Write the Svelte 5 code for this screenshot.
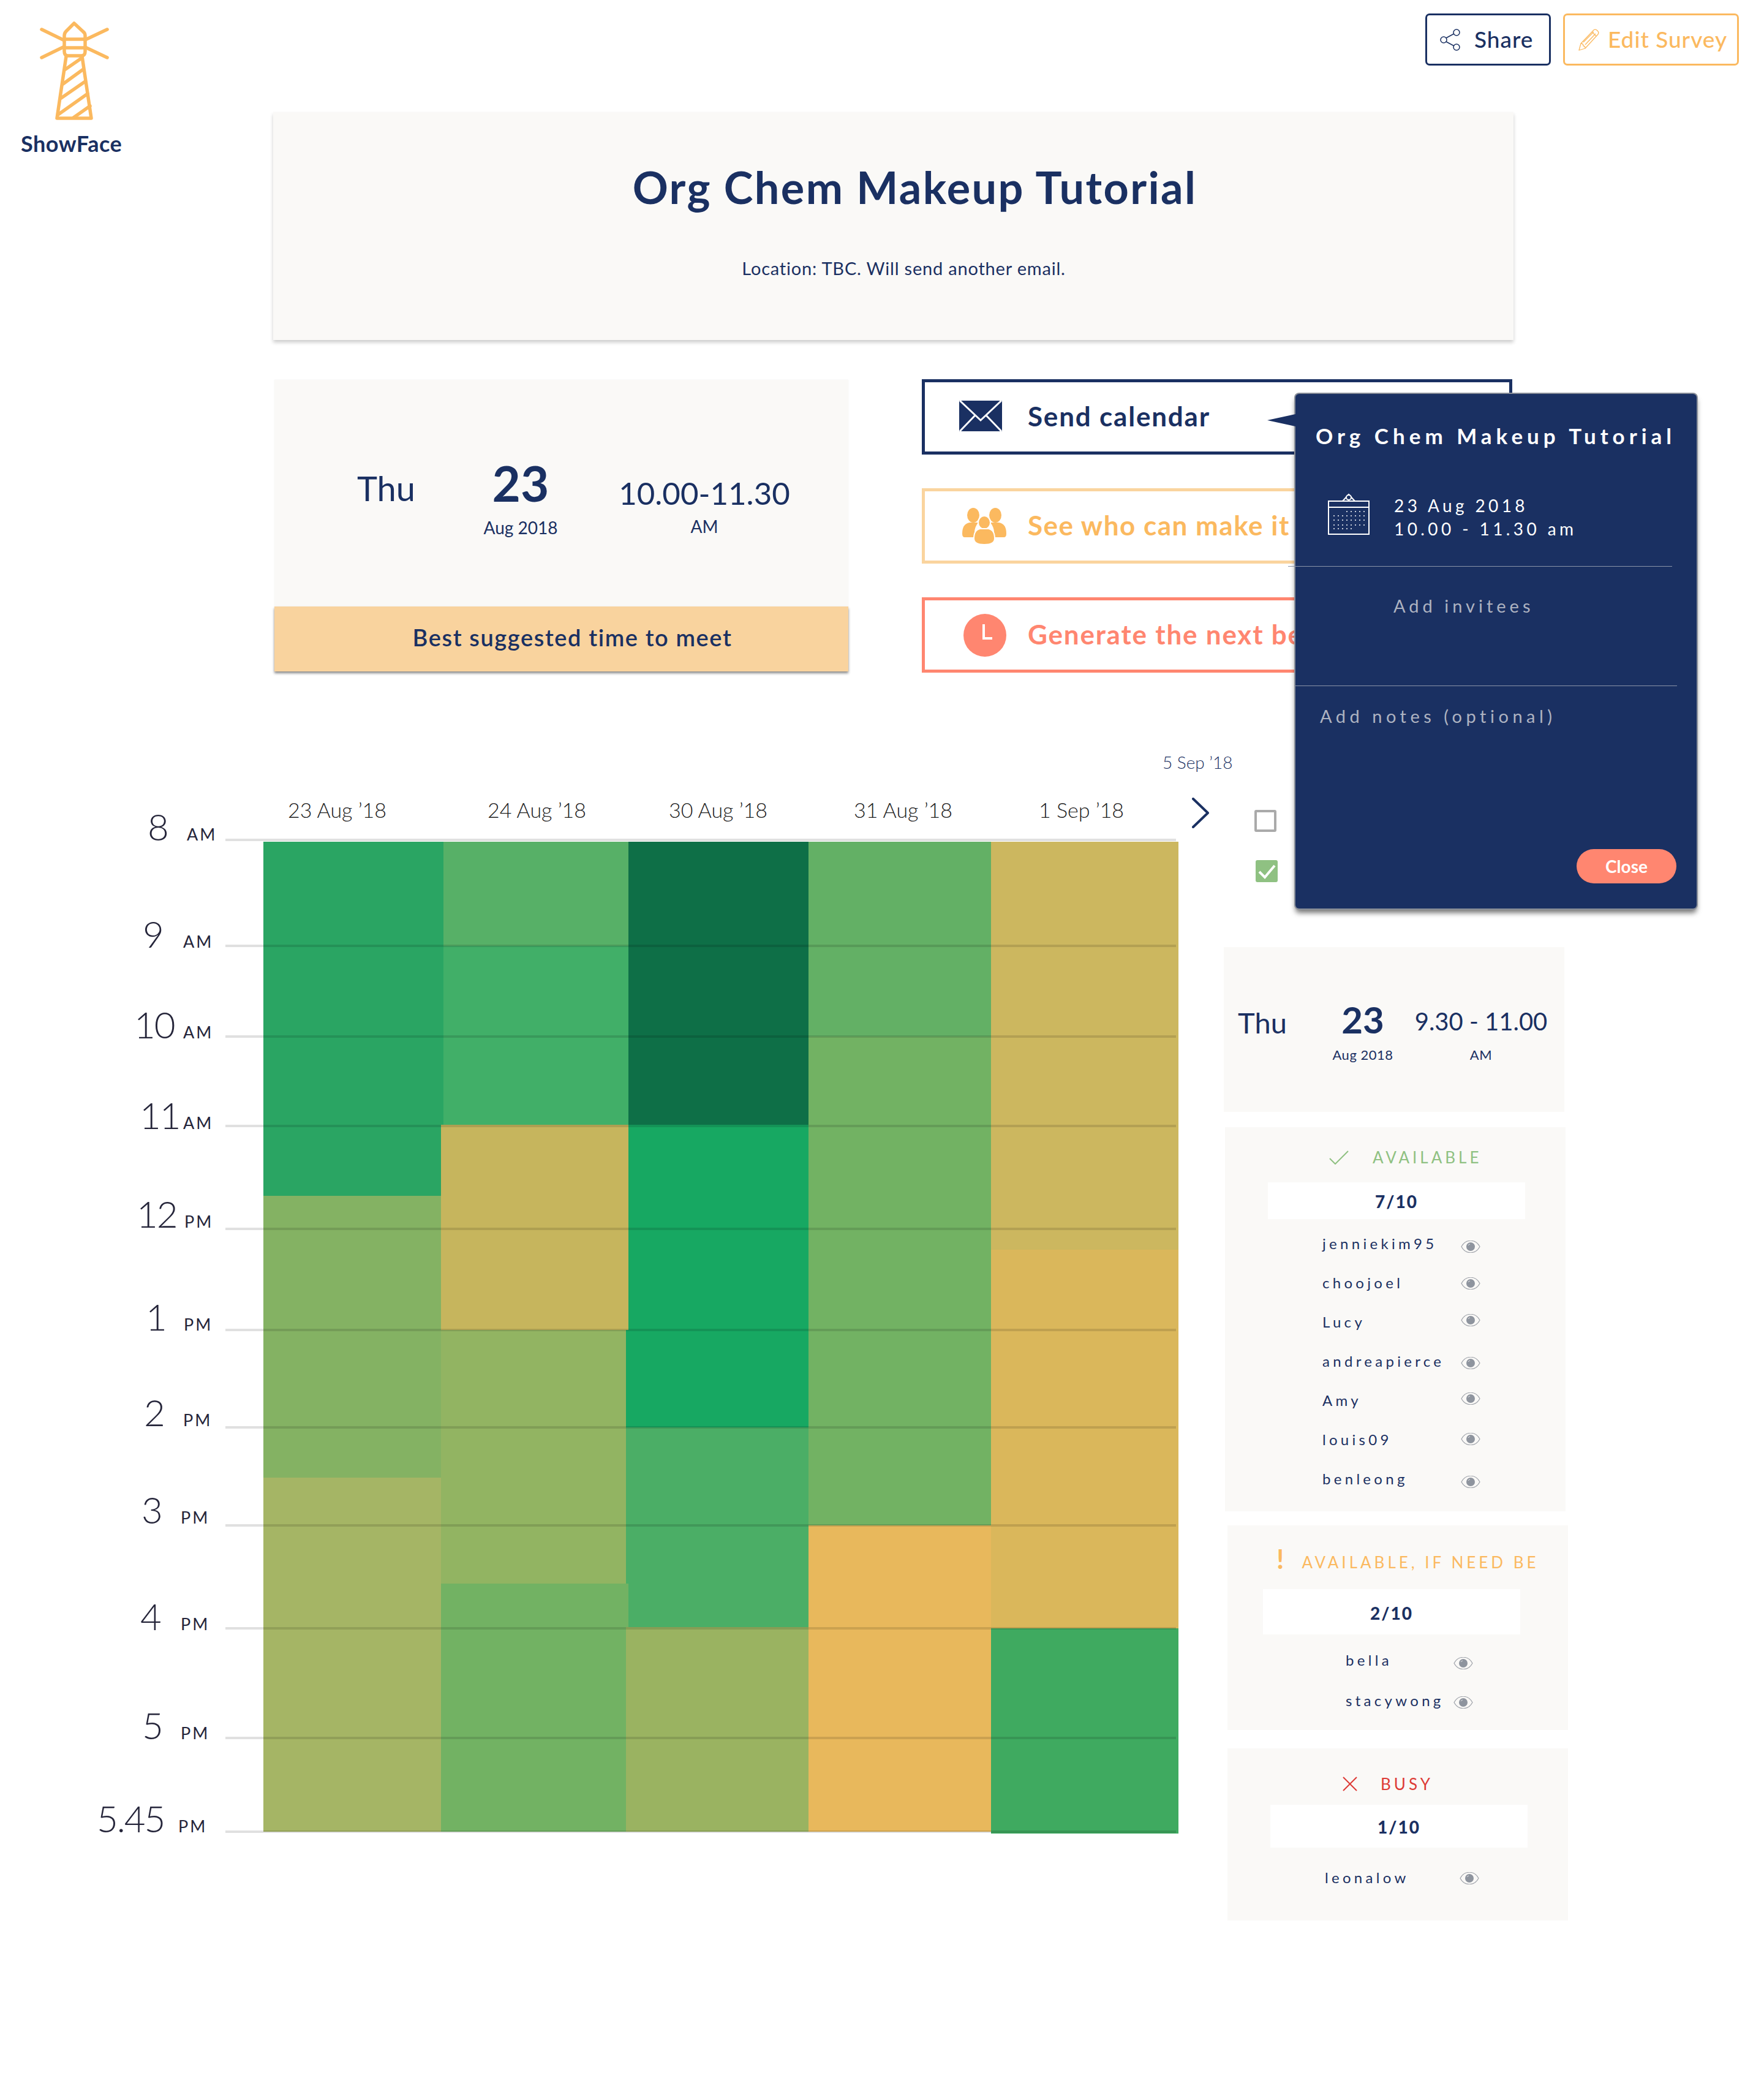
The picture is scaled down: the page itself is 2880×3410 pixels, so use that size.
<script>
  const TOP = 1200;

  const cells = [
    [430, 724, 1374, 1952, '#2aa563'],
    [430, 720, 1952, 2412, '#84b263'],
    [430, 720, 2412, 2990, '#a5b565'],
    [724, 1026, 1374, 1544, '#57b067'],
    [724, 1026, 1544, 1836, '#41af68'],
    [720, 1026, 1836, 2171, '#c6b55d'],
    [720, 1022, 2171, 2585, '#92b462'],
    [720, 1026, 2585, 2656, '#72b263'],
    [720, 1022, 2656, 2990, '#72b263'],
    [1026, 1320, 1374, 1836, '#0e6f47'],
    [1026, 1320, 1836, 2171, '#17a862'],
    [1022, 1320, 2171, 2330, '#17a862'],
    [1022, 1320, 2330, 2585, '#4bae66'],
    [1026, 1320, 2585, 2656, '#4bae66'],
    [1022, 1320, 2656, 2990, '#9ab361'],
    [1320, 1618, 1374, 1692, '#63b065'],
    [1320, 1618, 1692, 2490, '#72b263'],
    [1320, 1618, 2490, 2990, '#e8b85c'],
    [1618, 1924, 1374, 2040, '#ccb75f'],
    [1618, 1924, 2040, 2658, '#dab75b'],
    [1618, 1924, 2658, 2993, '#3faa60']
  ];

  const hours = [
    { t: '8', ap: 'AM', x: 241, apx: 305, y: 1371, base: 1373 },
    { t: '9', ap: 'AM', x: 233, apx: 299, y: 1544, base: 1548 },
    { t: '10', ap: 'AM', x: 219, apx: 299, y: 1692, base: 1696 },
    { t: '11', ap: 'AM', x: 228, apx: 299, y: 1838, base: 1844 },
    { t: '12', ap: 'PM', x: 223, apx: 301, y: 2006, base: 2005 },
    { t: '1', ap: 'PM', x: 238, apx: 300, y: 2171, base: 2173 },
    { t: '2', ap: 'PM', x: 235, apx: 299, y: 2330, base: 2329 },
    { t: '3', ap: 'PM', x: 231, apx: 295, y: 2490, base: 2488 },
    { t: '4', ap: 'PM', x: 229, apx: 295, y: 2658, base: 2662 },
    { t: '5', ap: 'PM', x: 232, apx: 295, y: 2837, base: 2840 },
    { t: '5.45', ap: 'PM', x: 158, apx: 291, y: 2990, base: 2992 }
  ];

  const dates = [
    { t: '23 Aug ’18', x: 470 },
    { t: '24 Aug ’18', x: 796 },
    { t: '30 Aug ’18', x: 1092 },
    { t: '31 Aug ’18', x: 1394 },
    { t: '1 Sep ’18', x: 1696 }
  ];

  const available = [
    ['jenniekim95', 4],
    ['choojoel', 0],
    ['Lucy', -4],
    ['andreapierce', 2],
    ['Amy', -4],
    ['louis09', -2],
    ['benleong', 4]
  ];
</script>

{#snippet eye(shift = 0)}
  <svg class="eye" style="transform: translateY({shift}px)" viewBox="0 0 32 20" width="32" height="20">
    <path d="M1 10 C8 -3 24 -3 31 10 C24 23 8 23 1 10 Z" fill="none" stroke="#a0a4ab" stroke-width="1.2" />
    <circle cx="16" cy="10" r="7" fill="#8e949e" />
    <path d="M12 8 Q13 6 15 6" fill="none" stroke="#e6e7ea" stroke-width="1" />
  </svg>
{/snippet}

<div class="page">
  <header class="top">
    <div class="logo">
      <svg viewBox="60 30 124 170" width="124" height="170">
        <g fill="none" stroke="#fbb95f" stroke-width="5.5" stroke-linecap="round" stroke-linejoin="round">
          <path d="M105 62 V58 Q105 54 108 51 L121 38 L135 51 Q139 54 139 58 V84 Q139 91 133 91 H111 Q105 91 105 84 Z" />
          <path d="M105 64 H139 M105 78 H139" />
          <path d="M68 48 L103 65 M175 48 L139 65 M68 94 L103 77 M175 94 L139 77" />
          <path d="M108 92 L93 193 H149 L134 92" />
          <path d="M107 113 L133 95 M103 137 L136 113 M100 160 L139 133 M95 187 L143 153 M120 192 L147 173" />
        </g>
      </svg>
      <div class="brand">ShowFace</div>
    </div>
    <div class="top-actions">
      <div class="btn share">
        <svg viewBox="0 0 34 36" width="34" height="36">
          <g fill="none" stroke="#1a3062" stroke-width="1.5">
            <circle cx="6" cy="18" r="5" />
            <circle cx="27" cy="6" r="5" />
            <circle cx="27" cy="30" r="5" />
            <path d="M10 15 L23 8 M10 21 L23 28" />
          </g>
        </svg>
        <span>Share</span>
      </div>
      <div class="btn edit">
        <svg viewBox="0 0 34 36" width="34" height="36">
          <g fill="none" stroke="#fbb95f" stroke-width="1.3" stroke-linejoin="round">
            <path d="M1 35 L4 24 L25 2 Q28 0 31 3 Q34 6 32 9 L11 32 Z" />
            <path d="M4 24 Q8 24 8 28 Q11 28 11 32 M22 5 L29 12 M8 22 L25 5 M11 26 L28 8" />
          </g>
        </svg>
        <span>Edit Survey</span>
      </div>
    </div>
  </header>

  <section class="title-card">
    <h1>Org Chem Makeup Tutorial</h1>
    <p>Location: TBC. Will send another email.</p>
  </section>

  <section class="meet">
    <div class="best">
      <div class="when">
        <div class="day">Thu</div>
        <div class="num">
          <div class="big">23</div>
          <div class="sub">Aug 2018</div>
        </div>
        <div class="span">
          <div class="range">10.00-11.30</div>
          <div class="sub ampm">AM</div>
        </div>
      </div>
      <div class="band">Best suggested time to meet</div>
    </div>

    <div class="actions">
      <div class="action send">
        <div class="action-icon">
          <svg viewBox="0 0 70 52" width="70" height="52">
            <path d="M0 1 H70 V51 H0 Z" fill="#1a3062" />
            <path d="M1 1 L35 33 L69 1 M1 51 L26 25 M69 51 L44 25" fill="none" stroke="#fff" stroke-width="3" />
          </svg>
        </div>
        Send calendar
      </div>
      <div class="action who">
        <div class="action-icon">
          <svg viewBox="0 0 72 60" width="72" height="60">
            <g fill="#fbb95f">
              <ellipse cx="18" cy="12" rx="10" ry="12" />
              <ellipse cx="54" cy="12" rx="10" ry="12" />
              <path d="M0 42 Q0 26 12 24 H26 Q20 32 20 40 V48 H4 Q0 48 0 42 Z" />
              <path d="M72 42 Q72 26 60 24 H46 Q52 32 52 40 V48 H68 Q72 48 72 42 Z" />
              <ellipse cx="36" cy="24" rx="10" ry="11" stroke="#fff" stroke-width="2" />
              <path d="M19 50 Q19 36 29 34 H43 Q53 36 53 50 Q53 60 36 60 Q19 60 19 50 Z" stroke="#fff" stroke-width="2" />
            </g>
          </svg>
        </div>
        See who can make it
      </div>
      <div class="action next">
        <div class="action-icon">
          <svg viewBox="0 0 70 70" width="70" height="70">
            <circle cx="35" cy="35" r="35" fill="#ff8670" />
            <path d="M33 17 V40 H47" fill="none" stroke="#fff" stroke-width="4" />
          </svg>
        </div>
        Generate the next best time
      </div>
    </div>
  </section>

  <main class="lower">
    <div class="chart">
      {#each cells as [x0, x1, y0, y1, color]}
        <div class="cell" style="left:{x0}px;width:{x1 - x0}px;top:{y0 - TOP}px;height:{y1 - y0}px;background:{color}"></div>
      {/each}
      {#each hours as h}
        <div class="rule" style="top:{h.y - TOP - 2}px"></div>
        <div class="hour" style="left:{h.x}px;top:{h.base - TOP - 60}px">{h.t}</div>
        <div class="hour-ap" style="left:{h.apx}px;top:{h.base - TOP - 27}px">{h.ap}</div>
      {/each}
      {#each dates as d}
        <div class="date" style="left:{d.x}px">{d.t}</div>
      {/each}
      <div class="range-end">5 Sep ’18</div>
      <svg class="chevron" viewBox="0 0 28 50" width="28" height="50">
        <path d="M2 2 L26 25 L2 48" fill="none" stroke="#1a3062" stroke-width="4" stroke-linecap="round" stroke-linejoin="round" />
      </svg>
    </div>

    <aside class="side">
      <div class="checkbox"></div>
      <div class="checkbox on">
        <svg viewBox="0 0 36 36" width="36" height="36">
          <path d="M6 19 L15 28 L31 9" fill="none" stroke="#fff" stroke-width="4" />
        </svg>
      </div>

      <div class="detail">
        <div class="d-day">Thu</div>
        <div class="d-num">
          <div class="d-big">23</div>
          <div class="d-sub">Aug 2018</div>
        </div>
        <div class="d-span">
          <div class="d-range">9.30 - 11.00</div>
          <div class="d-sub ap">AM</div>
        </div>
      </div>

      <div class="group yes">
        <div class="head">
          <svg viewBox="0 0 32 23" width="32" height="23">
            <path d="M1 13 L10 22 L31 1" fill="none" stroke="#8fc182" stroke-width="2" />
          </svg>
          <span>AVAILABLE</span>
        </div>
        <div class="count">7/10</div>
        {#each available as [name, shift]}
          <div class="person">
            <span>{name}</span>
            {@render eye(shift)}
          </div>
        {/each}
      </div>

      <div class="group maybe">
        <div class="head">
          <b>!</b>
          <span>AVAILABLE, IF NEED BE</span>
        </div>
        <div class="count">2/10</div>
        <div class="person"><span>bella</span>{@render eye(4)}</div>
        <div class="person"><span>stacywong</span>{@render eye(2)}</div>
      </div>

      <div class="group no">
        <div class="head">
          <svg viewBox="0 0 24 24" width="24" height="24">
            <path d="M1 1 L23 23 M23 1 L1 23" fill="none" stroke="#dd3b36" stroke-width="2" />
          </svg>
          <span>BUSY</span>
        </div>
        <div class="count">1/10</div>
        <div class="person"><span>leonalow</span>{@render eye(0)}</div>
      </div>
    </aside>
  </main>

  <div class="popover">
    <div class="arrow"></div>
    <div class="pop-title">Org Chem Makeup Tutorial</div>
    <div class="pop-when">
      <svg viewBox="0 0 68 68" width="68" height="68">
        <g fill="none" stroke="#fff" stroke-width="2">
          <rect x="1" y="13" width="66" height="54" />
          <path d="M1 23 H67 M24 13 L34 2 L44 13" />
          <circle cx="34" cy="7" r="4" fill="#1a3062" />
        </g>
        <g fill="#fff">
          {#each [30, 37, 44, 52, 58] as y, r}
            {#each [10, 17, 24, 31, 38, 45, 52, 59] as x, c}
              {#if !(r === 0 && c < 3) && !(r === 4 && c > 4)}
                <circle cx={x} cy={y} r="1" />
              {/if}
            {/each}
          {/each}
        </g>
      </svg>
      <div class="pop-date">
        <div>23 Aug 2018</div>
        <div>10.00 - 11.30 am</div>
      </div>
    </div>
    <div class="pop-rule first"></div>
    <div class="pop-invite">Add invitees</div>
    <div class="pop-rule second"></div>
    <div class="pop-notes">Add notes (optional)</div>
    <div class="pop-close">Close</div>
  </div>
</div>

<style>
  :global(body) {
    margin: 0;
    background: #fff;
  }

  .page {
    position: relative;
    width: 2880px;
    height: 3410px;
    overflow: hidden;
    font-family: 'Lato', 'Liberation Sans', sans-serif;
    color: #1a3062;
  }

  svg {
    flex: none;
  }

  /* header */
  .top {
    display: flex;
    justify-content: space-between;
    align-items: flex-start;
    height: 183px;
    padding: 22px 41px 0 34px;
    box-sizing: border-box;
  }

  .logo {
    display: flex;
    flex-direction: column;
    margin-top: 8px;
  }

  .logo svg {
    margin-left: 26px;
  }

  .brand {
    margin-top: 12px;
    font-size: 36px;
    line-height: 44px;
    font-weight: 700;
    letter-spacing: 0.5px;
  }

  .top-actions {
    display: flex;
    gap: 20px;
  }

  .btn {
    display: flex;
    align-items: center;
    height: 85px;
    box-sizing: border-box;
    border: 3px solid;
    border-radius: 7px;
    font-size: 37px;
    font-weight: 500;
    letter-spacing: 1px;
  }

  .btn span {
    margin-top: -2px;
  }

  .share {
    width: 205px;
    padding-left: 21px;
    gap: 22px;
    border-color: #1a3062;
  }

  .edit {
    width: 287px;
    padding-left: 22px;
    gap: 14px;
    border-color: #fbb95f;
    color: #fbb95f;
  }

  /* title */
  .title-card {
    width: 2025px;
    height: 372px;
    margin-left: 446px;
    box-sizing: border-box;
    padding: 82px 0 0 34px;
    background: #faf9f7;
    box-shadow: 0 4px 6px rgba(0, 0, 0, 0.2);
    text-align: center;
  }

  h1 {
    margin: 0;
    padding-left: 36px;
    font-size: 72px;
    line-height: 80px;
    font-weight: 700;
    letter-spacing: 2.4px;
  }

  .title-card p {
    margin: 76px 0 0;
    font-size: 29px;
    line-height: 34px;
    letter-spacing: 0.8px;
  }

  /* best time + actions */
  .meet {
    display: flex;
    gap: 120px;
    margin: 65px 0 0 448px;
  }

  .best {
    width: 937px;
    height: 476px;
    background: #faf9f7;
    box-shadow: 0 0 2px rgba(0, 0, 0, 0.06);
    display: flex;
    flex-direction: column;
  }

  .when {
    display: flex;
    height: 370px;
    text-align: center;
  }

  .day {
    width: 92px;
    margin: 147px 0 0 135px;
    font-size: 56px;
    line-height: 60px;
  }

  .num {
    width: 200px;
    margin: 124px 0 0 75px;
  }

  .big {
    font-size: 80px;
    line-height: 88px;
    font-weight: 700;
  }

  .sub {
    margin-top: 14px;
    font-size: 28px;
    line-height: 30px;
  }

  .span {
    width: 400px;
    margin-top: 158px;
  }

  .range {
    font-size: 51px;
    line-height: 54px;
  }

  .sub.ampm {
    margin-top: 12px;
  }

  .band {
    height: 106px;
    padding-left: 36px;
    box-sizing: border-box;
    background: #f9d39e;
    box-shadow: 0 3px 4px rgba(0, 0, 0, 0.45);
    font-size: 38px;
    font-weight: 600;
    line-height: 100px;
    text-align: center;
    letter-spacing: 1.6px;
  }

  .actions {
    display: flex;
    flex-direction: column;
    gap: 55px;
    width: 964px;
    margin-top: -1px;
  }

  .action {
    display: flex;
    align-items: center;
    height: 123px;
    box-sizing: border-box;
    border: 5px solid;
    padding: 0 0 4px 56px;
    font-size: 44px;
    font-weight: 700;
    letter-spacing: 1.8px;
    white-space: nowrap;
  }

  .action-icon {
    display: flex;
    width: 112px;
    flex: none;
  }

  .who svg,
  .next svg {
    margin: 4px 0 0 5px;
  }

  .next svg {
    margin-left: 7px;
  }

  .send {
    border-color: #1a3062;
  }

  .who {
    border-color: #fad49e;
    color: #fbb95f;
    letter-spacing: 1.5px;
  }

  .next {
    border-color: #ff8670;
    color: #ff8670;
  }

  /* chart */
  .lower {
    display: flex;
    margin-top: 102px;
  }

  .chart {
    position: relative;
    flex: none;
    width: 1960px;
    height: 1840px;
  }

  .cell,
  .rule,
  .hour,
  .hour-ap,
  .date,
  .range-end,
  .chevron {
    position: absolute;
  }

  .rule {
    left: 368px;
    width: 1552px;
    height: 4px;
    background: rgba(0, 0, 0, 0.12);
  }

  .hour {
    font-size: 60px;
    line-height: 72px;
    font-weight: 300;
    letter-spacing: -2px;
    color: #25253a;
    white-space: nowrap;
  }

  .hour-ap {
    font-size: 27px;
    line-height: 32px;
    letter-spacing: 3px;
    color: #25253a;
  }

  .date {
    top: 102px;
    font-size: 34px;
    line-height: 40px;
    font-weight: 300;
    color: #222;
    white-space: nowrap;
  }

  .range-end {
    left: 1898px;
    top: 28px;
    font-size: 28px;
    line-height: 32px;
    font-weight: 300;
    white-space: nowrap;
  }

  .chevron {
    left: 1946px;
    top: 102px;
  }

  /* side column */
  .side {
    width: 600px;
    margin-left: 38px;
    padding-top: 122px;
  }

  .checkbox {
    width: 36px;
    height: 36px;
    box-sizing: border-box;
    margin-left: 50px;
    border: 4px solid #aaa;
    border-radius: 3px;
  }

  .checkbox.on {
    margin: 46px 0 0 52px;
    border: 0;
    background: #8fc182;
  }

  .checkbox svg {
    display: block;
  }

  .detail {
    display: flex;
    width: 556px;
    height: 269px;
    margin-top: 106px;
    background: #faf9f7;
    text-align: center;
  }

  .d-day {
    width: 80px;
    margin: 93px 0 0 23px;
    font-size: 47px;
    line-height: 60px;
  }

  .d-num {
    width: 120px;
    margin: 82px 0 0 64px;
  }

  .d-big {
    font-size: 60px;
    line-height: 72px;
    font-weight: 700;
  }

  .d-sub {
    margin-top: 8px;
    font-size: 22px;
    line-height: 28px;
    letter-spacing: 0.5px;
    white-space: nowrap;
  }

  .d-sub.ap {
    margin-top: 16px;
  }

  .d-span {
    width: 240px;
    margin: 96px 0 0 13px;
  }

  .d-range {
    font-size: 40px;
    line-height: 50px;
    white-space: nowrap;
  }

  .group {
    width: 556px;
    background: #faf9f7;
    box-sizing: border-box;
  }

  .yes {
    height: 627px;
    margin: 25px 0 0 2px;
  }

  .maybe {
    height: 334px;
    margin: 23px 0 0 6px;
  }

  .no {
    height: 281px;
    margin: 30px 0 0 6px;
  }

  .head {
    display: flex;
    align-items: center;
    box-sizing: border-box;
    font-size: 26px;
    line-height: 30px;
    letter-spacing: 5px;
  }

  .yes .head {
    height: 90px;
    padding: 8px 0 0 170px;
    gap: 39px;
    color: #8fc182;
  }

  .maybe .head {
    height: 104px;
    padding: 16px 0 0 80px;
    gap: 29px;
    color: #fbb95f;
  }

  .maybe .head b {
    font-size: 44px;
    font-weight: 700;
    letter-spacing: 0;
    margin-bottom: 12px;
  }

  .no .head {
    height: 92px;
    padding: 24px 0 0 188px;
    gap: 38px;
    color: #dd3b36;
  }

  .count {
    width: 420px;
    margin-left: 70px;
    background: #fff;
    font-size: 28px;
    font-weight: 900;
    letter-spacing: 2px;
    text-align: center;
  }

  .yes .count {
    height: 60px;
    line-height: 62px;
    margin-bottom: 9px;
  }

  .maybe .count {
    height: 74px;
    line-height: 78px;
    margin: 0 0 10px 58px;
  }

  .no .count {
    height: 70px;
    line-height: 72px;
    margin-bottom: 18px;
  }

  .person {
    display: flex;
    align-items: center;
    height: 64px;
    padding-left: 159px;
    font-size: 24px;
    letter-spacing: 5.3px;
  }

  .person span {
    width: 226px;
    flex: none;
    margin-top: -3px;
    white-space: nowrap;
  }

  .maybe .person {
    height: 66px;
    padding-left: 193px;
  }

  .maybe .person span {
    width: 176px;
  }

  .no .person {
    padding-left: 159px;
  }

  .no .person span {
    width: 220px;
  }

  /* calendar popover */
  .popover {
    position: absolute;
    left: 2115px;
    top: 643px;
    width: 655px;
    height: 840px;
    display: flex;
    flex-direction: column;
    box-sizing: border-box;
    background: #1a3062;
    border-radius: 6px;
    box-shadow: 0 0 0 2px #8a8f99, 0 7px 8px rgba(0, 0, 0, 0.55);
    color: #fff;
  }

  .arrow {
    position: absolute;
    left: -46px;
    top: 33px;
    width: 0;
    height: 0;
    border-style: solid;
    border-width: 10px 46px 10px 0;
    border-color: transparent #1a3062 transparent transparent;
  }

  .pop-title {
    margin: 48px 0 0 33px;
    font-size: 35px;
    line-height: 40px;
    font-weight: 700;
    letter-spacing: 7px;
    white-space: nowrap;
  }

  .pop-when {
    display: flex;
    gap: 40px;
    margin: 74px 0 0 53px;
  }

  .pop-date {
    margin-top: 1px;
    font-size: 28px;
    line-height: 38px;
    letter-spacing: 5.4px;
    white-space: nowrap;
  }

  .pop-rule {
    height: 1px;
    background: #8a93a8;
  }

  .pop-rule.first {
    width: 627px;
    margin: 42px 0 0 -12px;
  }

  .pop-rule.second {
    width: 623px;
    margin-top: 112px;
  }

  .pop-invite,
  .pop-notes {
    font-size: 29px;
    line-height: 36px;
    letter-spacing: 6px;
    color: #aeb3c1;
    white-space: nowrap;
  }

  .pop-invite {
    margin: 46px 0 0 160px;
  }

  .pop-notes {
    margin: 31px 0 0 40px;
    letter-spacing: 6.5px;
  }

  .pop-close {
    align-self: flex-end;
    width: 163px;
    height: 56px;
    margin: auto 33px 41px 0;
    border-radius: 28px;
    background: #ff8670;
    font-size: 28px;
    font-weight: 700;
    line-height: 56px;
    text-align: center;
  }
</style>
